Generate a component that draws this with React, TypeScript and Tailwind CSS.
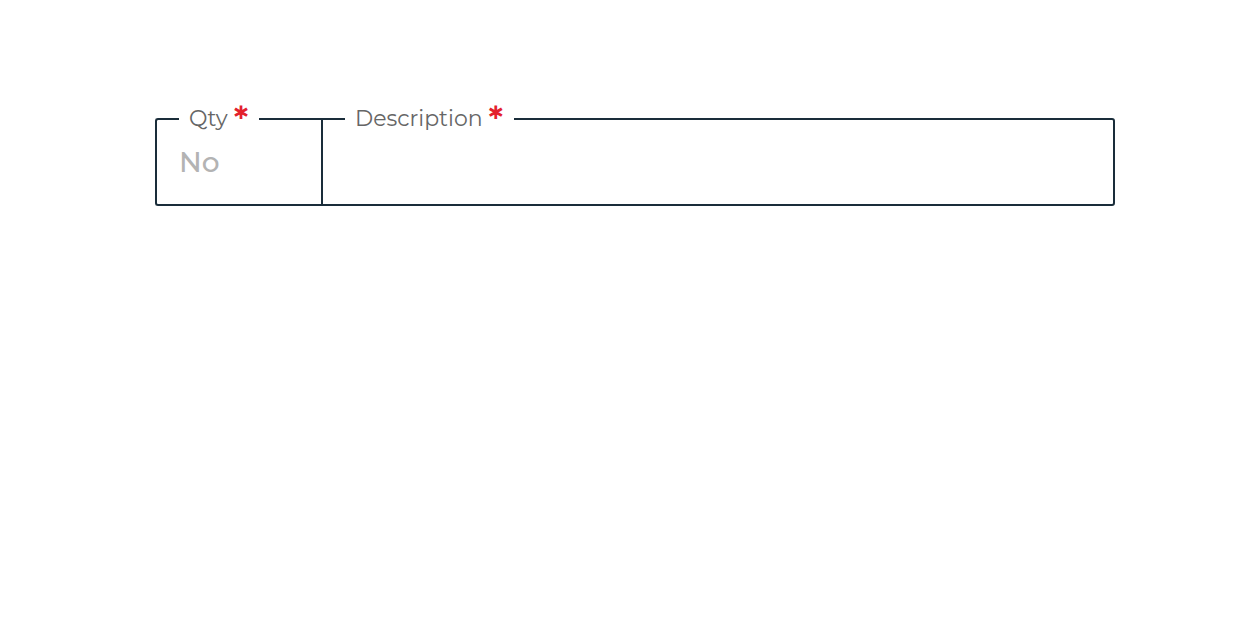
import React from 'react';

const font = { fontFamily: '"Montserrat", "Noto Sans", "Open Sans", sans-serif' };

function Field({ label, placeholder, className }: { label: string; placeholder?: string; className: string }) {
  return (
    <fieldset className={`border-2 border-[#1a2d3a] pb-[12px] ${className}`}>
      <legend className="flex items-start pl-[10px] pr-[11px] text-[22px] leading-[26px] text-[#666666]">
        <span>{label}</span>
        <span className="ml-[6px] -mt-[4px] h-[26px] text-[35px] font-semibold leading-[35px] text-[#e3212d]">*</span>
      </legend>
      <input
        className="h-[60px] w-full bg-transparent text-[28px] font-medium text-[#333] outline-none placeholder:text-[#b3b3b3]"
        placeholder={placeholder}
        style={font}
      />
    </fieldset>
  );
}

export default function App() {
  return (
    <div className="min-h-screen bg-white pt-[106px] pl-[155px]" style={font}>
      <div className="flex w-[960px]">
        <Field label="Qty" placeholder="No" className="w-[166px] rounded-l-[3px] border-r-0 pl-[22px] pr-[10px]" />
        <Field label="Description" className="flex-1 rounded-r-[3px] pl-[22px] pr-[10px]" />
      </div>
    </div>
  );
}
